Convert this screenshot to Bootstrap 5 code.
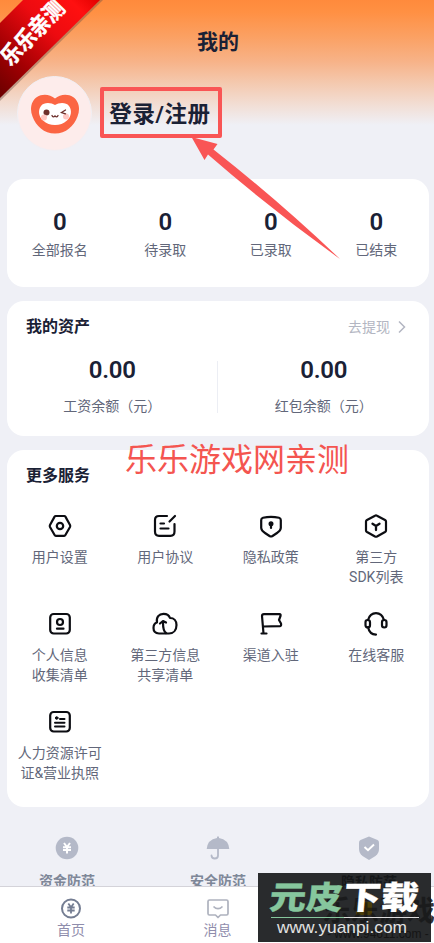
<!DOCTYPE html>
<html lang="zh-CN">
<head>
<meta charset="utf-8">
<meta name="viewport" content="width=device-width, initial-scale=1">
<title>我的</title>
<link href="https://cdn.jsdelivr.net/npm/bootstrap@5.3.0/dist/css/bootstrap.min.css" rel="stylesheet">
<style>
body{font-family:Roboto,"Noto Sans CJK SC",sans-serif;color:#1a2135;background:#eff0f6;font-size:14px}
.screen{width:434px;height:943px;background:linear-gradient(180deg,#ff8a3c 0,#ff9043 12px,#fba062 36px,#f7b389 62px,#f4c8ad 82px,#f2ddd3 104px,#eff0f6 125px)}
.topbar{height:76px;padding-top:26px;font-size:21px;line-height:32px;padding-left:2px}
.profile{height:103px;padding-left:17px}
.avatar{width:75px;height:75px;background:#fdeceb;border:1px solid #f1eff4}
.login{font-size:22.5px;line-height:30px;width:122px;height:51px;border:4px solid #f95555;border-radius:2px;margin:11px 0 0 8px;letter-spacing:.6px;padding:2px 2px 0 0}
.panel{background:#fff;border-radius:17px;margin:0 5px 14px 7px}
.stats{height:108px;padding-top:28px}
.num{font-size:24px;line-height:30px;font-weight:600;font-family:Roboto,sans-serif;letter-spacing:-.2px}
.lbl{font-size:14px;line-height:20px;color:#62677a}
.stats .lbl{margin-top:3px}
.assets{height:135px;padding-top:14px}
.ttl{font-size:16px;line-height:24px;font-weight:700;padding-left:19px}
.withdraw{font-size:14px;line-height:24px;color:#b3b6c2;padding-right:23px}
.balances{margin-top:16px}
.balances .lbl{margin-top:11px}
.rule{width:1px;height:52px;background:#eceef4;margin:6px 1px 0 -1px}
.services{height:357px;padding-top:14px;margin-bottom:0}
.grid{margin-top:23px}
.svc{height:98px}
.svc svg{margin:3px auto 9px}
.ink{fill:none;stroke:#0c0d12;stroke-width:2.2;stroke-linecap:round;stroke-linejoin:round}
.guard{height:79px;padding:29px 35px 0 37px}
.guard .item{width:60px;font-weight:700;font-size:14px;line-height:20px;color:#7e8798;white-space:nowrap}
.guard .item svg{margin:0 auto 11px}
.tabs{height:57px;background:#fff;border-top:1px solid #d4d3d9;padding:10px 55px 0 56px}
.tabs .item{width:30px;font-size:14px;line-height:20px;color:#8f8dac}
.tabs .item svg{margin:0 auto 1px}
.ribbon{left:0;top:0;width:105px;height:102px}
.ribbon text{font:bold 22.5px "Noto Sans CJK SC",sans-serif;fill:#fff;stroke:#fff;stroke-width:.5}
.pointer{left:185px;top:132px}
.caption{left:125px;top:434px;font-size:32px;line-height:46px;color:#f45550;font-weight:400;white-space:nowrap;font-family:"Noto Sans CJK SC",sans-serif}
.stamp{left:258px;top:873px}
</style>
<script src="https://cdn.jsdelivr.net/npm/bootstrap@5.3.0/dist/js/bootstrap.bundle.min.js"></script>
</head>
<body class="overflow-hidden">
<div class="screen position-relative overflow-hidden d-flex flex-column">
  <header class="topbar text-center fw-bold">我的</header>
  <section class="profile d-flex align-items-start">
    <div class="avatar rounded-circle d-flex align-items-center justify-content-center">
      <svg width="50" height="42" viewBox="0 0 50 42"><path d="M25 5.500C20 1 12 .5 7 4C1 8-.5 16 2.500 23.500C6 33 14 40.500 25 40.500S44 33 47.500 23.500C50.500 16 49 8 43 4C38 .5 30 1 25 5.500Z" fill="#fb6543"/><path d="M25 12C21 9.500 14 9 11 13C7.500 17.500 9 24 13 27.500Q18 32 25 32T37 27.500C41 24 42.500 17.500 39 13C36 9 29 9.500 25 12Z" fill="#fff"/><circle cx="16.500" cy="19.500" r="3" fill="#6d302c"/><circle cx="14" cy="24.500" r="3" fill="#ffc8c3"/><circle cx="36" cy="23.500" r="3" fill="#ffc8c3"/><path d="M22 22.500Q23 25 25 23Q27 25 28 22.500M35.500 17L31.500 19.500L35.500 20.800" fill="none" stroke="#6d302c" stroke-width="1.300" stroke-linecap="round"/></svg>
    </div>
    <div class="login fw-bold d-flex align-items-center justify-content-center text-nowrap">登录/注册</div>
  </section>

  <section class="panel stats flex-shrink-0">
    <div class="row g-0 text-center">
      <div class="col-3"><div class="num">0</div><div class="lbl">全部报名</div></div>
      <div class="col-3"><div class="num">0</div><div class="lbl">待录取</div></div>
      <div class="col-3"><div class="num">0</div><div class="lbl">已录取</div></div>
      <div class="col-3"><div class="num">0</div><div class="lbl">已结束</div></div>
    </div>
  </section>

  <section class="panel assets flex-shrink-0">
    <div class="d-flex justify-content-between">
      <div class="ttl">我的资产</div>
      <div class="withdraw d-flex align-items-center gap-2">去提现<svg width="8" height="14" viewBox="0 0 8 14"><path d="M1 1.500L6.500 7L1 12.500" fill="none" stroke="#b3b6c2" stroke-width="1.500"/></svg></div>
    </div>
    <div class="balances d-flex text-center">
      <div class="flex-fill w-50"><div class="num">0.00</div><div class="lbl">工资余额（元）</div></div>
      <div class="rule flex-shrink-0"></div>
      <div class="flex-fill w-50"><div class="num">0.00</div><div class="lbl">红包余额（元）</div></div>
    </div>
  </section>

  <section class="panel services flex-shrink-0">
    <div class="ttl">更多服务</div>
    <div class="grid row g-0 text-center lbl">
      <div class="svc col-3"><svg class="ink d-block" width="24" height="24" viewBox="0 0 24 24"><path d="M7.600 2H16.400Q17 2 17.400 2.600L22 11Q22.500 12 22 13L17.400 21Q17 21.800 16.200 21.800H7.800Q7 21.800 6.600 21L2 13Q1.500 12 2 11L6.600 2.600Q7 2 7.600 2Z"/><circle cx="12" cy="12" r="3.200"/></svg>用户设置</div>
      <div class="svc col-3"><svg class="ink d-block" width="24" height="24" viewBox="0 0 24 24"><path d="M14 2H6Q2 2 2 6V17.500Q2 21.800 6 21.800H17.500Q21.500 21.800 21.500 17.500V10M16.500 7.500L22 2M7.500 9.500H11M7.500 14.500H15.500"/></svg>用户协议</div>
      <div class="svc col-3"><svg class="ink d-block" width="24" height="24" viewBox="0 0 24 24"><path d="M4 3.800Q12 1.800 20 3.800Q21.800 4.300 21.800 6V14Q21.500 17 18 19L13.500 22Q12 22.800 10.500 22L6 19Q2.500 17 2.200 14V6Q2.200 4.300 4 3.800Z"/><path d="M12 11V14"/><circle cx="12" cy="9.800" r="1.400" fill="#0c0d12"/></svg>隐私政策</div>
      <div class="svc col-3"><svg class="ink d-block" width="24" height="24" viewBox="0 0 24 24"><path d="M11 1.700Q12 1 13 1.700L21 6Q22 6.600 22 7.600V16.400Q22 17.400 21 18L13 22.500Q12 23 11 22.500L3 18Q2 17.400 2 16.400V7.600Q2 6.600 3 6Z"/><path d="M8.500 9.700L12 12L15.500 9.700M12 12V16" stroke-width="2.300"/></svg>第三方<br>SDK列表</div>
      <div class="svc col-3"><svg class="ink d-block" width="24" height="24" viewBox="0 0 24 24"><rect x="2.200" y="2" width="19.600" height="19.500" rx="3.500"/><circle cx="12" cy="10" r="3"/><path d="M9 16.700H15.500"/></svg>个人信息<br>收集清单</div>
      <div class="svc col-3"><svg class="ink d-block" width="26" height="24" viewBox="0 0 26 24"><path d="M7 21.500C3 21.500 1.500 19 1.500 16C1.500 13 3 11 5 10.500C4 5 7 1.800 11.500 1.800C15 1.800 17 3 18 6C22 6 24.500 9 24.500 13C24.500 18 21.500 21.500 17 21.500Z"/><path d="M14 21Q11 19 11 10.500M8 11.500L11 9L14 10.500"/></svg>第三方信息<br>共享清单</div>
      <div class="svc col-3"><svg class="ink d-block" width="24" height="24" viewBox="0 0 24 24"><path d="M4.500 21.500L3 4Q3 2.200 5 2.200H20.500Q22 2.200 21.500 4L20 8L22 11.500Q22.500 14 21 14.200L4.200 14.500M2.500 21.500H7.500"/></svg>渠道入驻</div>
      <div class="svc col-3"><svg class="ink d-block" width="24" height="24" viewBox="0 0 24 24"><path d="M4 8Q6 1.200 12 1.200T20 8M4 15Q5.500 22.500 12 22.600"/><rect x="1.500" y="8" width="4.500" height="7.500" rx="2.200"/><rect x="18" y="8" width="4.500" height="7.500" rx="2.200"/></svg>在线客服</div>
      <div class="svc col-3"><svg class="ink d-block" width="24" height="24" viewBox="0 0 24 24"><rect x="2.200" y="2" width="19.600" height="19.500" rx="3.500"/><path d="M12 9H16.500M7 12.700H16.500M7 16.500H16.500" stroke-width="2"/><circle cx="8.700" cy="8" r="1.300" fill="#0c0d12" stroke-width="1"/></svg>人力资源许可<br>证&amp;营业执照</div>
    </div>
  </section>

  <section class="guard flex-shrink-0 d-flex justify-content-between text-center overflow-hidden">
    <div class="item"><svg class="d-block" width="24" height="24" viewBox="0 0 24 24"><circle cx="12" cy="12" r="11.300" fill="#b4b9c8"/><path d="M9 7L12 11L15 7M8 11.200H16M8 14H16M12 11V17.500" fill="none" stroke="#fff" stroke-width="2"/></svg>资金防范</div>
    <div class="item"><svg class="d-block" width="24" height="24" viewBox="0 0 24 24"><path d="M.7 13Q1.500 3.500 11 2V1Q12-.3 13 1V2Q22.500 3.500 23.300 13Z" fill="#b4b9c8"/><path d="M12 12V19.500Q12 22.500 8.800 22.500T5.500 19.500" fill="none" stroke="#b4b9c8" stroke-width="1.800" stroke-linecap="round"/></svg>安全防范</div>
    <div class="item"><svg class="d-block" width="24" height="24" viewBox="0 0 24 24"><path d="M12 .5L20.500 4Q22 4.700 22 6.500V13Q22 17 18.500 20L12 24L5.500 20Q2 17 2 13V6.500Q2 4.700 3.500 4Z" fill="#b4b9c8"/><path d="M7.500 11L11 14.200L17 8.500" fill="none" stroke="#fff" stroke-width="2"/></svg></div>
  </section>

  <nav class="tabs flex-shrink-0 d-flex justify-content-between text-center">
    <div class="item"><svg class="d-block" width="22" height="22" viewBox="0 0 22 22"><circle cx="11" cy="11.500" r="9" fill="none" stroke="#747d92" stroke-width="2"/><path d="M8.300 6.500L11 10.200L13.700 6.500M7.300 10.500H14.700M7.300 13.500H14.700M11 10V16.500" fill="none" stroke="#747d92" stroke-width="1.800"/></svg>首页</div>
    <div class="item"><svg class="d-block" width="22" height="22" viewBox="0 0 22 22"><path d="M2.500 3H19.500Q21 3 21 4.500V16.500Q21 18 19.500 18H13.500L11 20.500L8.500 18H2.500Q1 18 1 16.500V4.500Q1 3 2.500 3ZM6.500 9.500Q11 14 15.500 9.500" fill="none" stroke="#aeb2be" stroke-width="1.700" stroke-linejoin="round"/></svg>消息</div>
    <div class="item"></div>
  </nav>

  <svg class="ribbon position-absolute" viewBox="0 0 105 102">
    <defs><linearGradient id="red" x1="0" y1="1" x2="1" y2="0"><stop offset="0" stop-color="#690000"/><stop offset=".28" stop-color="#a30003"/><stop offset=".6" stop-color="#ed0b10"/><stop offset=".85" stop-color="#ff1010"/><stop offset="1" stop-color="#e20000"/></linearGradient></defs>
    <path d="M0 101L103 0H97L0 96Z" fill="#6b5145" opacity=".4"/>
    <path d="M0 23L23 0H100L0 98Z" fill="url(#red)"/>
    <text transform="translate(10.500 67) rotate(-46)" textLength="80" lengthAdjust="spacingAndGlyphs">乐乐亲测</text>
  </svg>
  <svg class="pointer position-absolute" width="160" height="132" viewBox="0 0 160 132"><path d="M6.500 5L32.500 12L28.500 17.500Q94 69 155 127Q88 79 23 22.500L19.500 28Z" fill="#f95555"/></svg>
  <div class="caption position-absolute">乐乐游戏网亲测</div>
  <svg class="stamp position-absolute" width="176" height="70" viewBox="0 0 176 70">
    <text x="65" y="48" font-family="Noto Sans CJK SC, sans-serif" font-weight="700" font-size="28" fill="#686a70">乐乐游戏</text>
    <rect width="173" height="69" fill="#292b2d"/>
    <text x="83" y="14" font-family="Noto Sans CJK SC, sans-serif" font-weight="700" font-size="14" fill="#151719">隐私防范</text>
    <path d="M98 29H114V42H98Z" fill="#4b3e0b"/>
    <text x="65" y="48" font-family="Noto Sans CJK SC, sans-serif" font-weight="700" font-size="28" fill="#111" opacity=".6">乐乐游戏</text>
    <text x="69" y="65" font-family="Liberation Sans, sans-serif" font-size="12" fill="#151515">- www.94611.com -</text>
    <g font-family="Noto Sans CJK SC, sans-serif" font-weight="900" font-size="32" stroke-width=".3" transform="skewX(-5)"><text x="14" y="36" textLength="73" lengthAdjust="spacingAndGlyphs" fill="#86c69d" stroke="#86c69d">元皮</text><text x="88" y="36" textLength="75" lengthAdjust="spacingAndGlyphs" fill="#fff" stroke="#fff">下载</text></g>
    <path d="M13 44.500H86" stroke="#86c69d"/><path d="M86 44.500H161" stroke="#ddd"/>
    <text x="19" y="59.500" font-family="Liberation Sans, sans-serif" font-size="17" fill="#e2e2e2" textLength="130" lengthAdjust="spacingAndGlyphs">www.yuanpi.com</text>
  </svg>
</div>
</body>
</html>
